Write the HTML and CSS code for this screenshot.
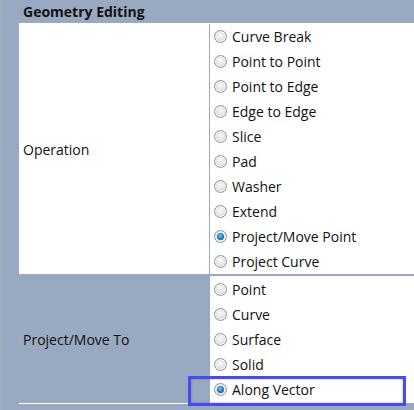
FILE: index.html
```html
<!DOCTYPE html>
<html>
<head>
<meta charset="utf-8">
<link rel="stylesheet" href="styles.css">
</head>
<body>
<div class="panel">
  <div class="header">Geometry Editing</div>
  <div class="grid">
    <div class="row row-op">
      <div class="label">Operation</div>
      <div class="options">
        <div class="opt"><span class="radio"></span>Curve Break</div>
        <div class="opt"><span class="radio"></span>Point to Point</div>
        <div class="opt"><span class="radio"></span>Point to Edge</div>
        <div class="opt"><span class="radio"></span>Edge to Edge</div>
        <div class="opt"><span class="radio"></span>Slice</div>
        <div class="opt"><span class="radio"></span>Pad</div>
        <div class="opt"><span class="radio"></span>Washer</div>
        <div class="opt"><span class="radio"></span>Extend</div>
        <div class="opt"><span class="radio checked"></span>Project/Move Point</div>
        <div class="opt"><span class="radio"></span>Project Curve</div>
      </div>
    </div>
    <div class="row row-proj">
      <div class="label">Project/Move To</div>
      <div class="options">
        <div class="opt"><span class="radio"></span>Point</div>
        <div class="opt"><span class="radio"></span>Curve</div>
        <div class="opt"><span class="radio"></span>Surface</div>
        <div class="opt"><span class="radio"></span>Solid</div>
        <div class="opt highlighted"><span class="radio checked"></span>Along Vector</div>
      </div>
    </div>
  </div>
</div>
</body>
</html>
```

FILE: styles.css
```css
html, body {
  margin: 0;
  padding: 0;
}
body {
  background: #9aa9c2;
  font-family: "Open Sans", "Noto Sans", sans-serif;
  font-size: 14px;
  color: #111;
  width: 414px;
  height: 410px;
  overflow: hidden;
}
.panel {
  border-left: 1px solid #aab0b8;
  height: 410px;
  box-sizing: border-box;
}
.header {
  height: 23px;
  line-height: 23px;
  padding-left: 22px;
  font-weight: bold;
  color: #111;
}
.grid {
  margin-left: 18px;
}
.row {
  display: grid;
  grid-template-columns: 191px 1fr;
}
.row-op {
  background: #fff;
  border-bottom: 2px solid #9aa9c2;
  padding-top: 1px;
}
.row-op .label {
  border-right: 1px solid #9aa9c2;
}
.row-proj {
  border-bottom: 1px solid #fff;
  width: 191px;
  grid-template-columns: 191px 224px;
}
.row-proj .label {
  background: #9aa9c2;
}
.row-proj .options {
  background: #fff;
  padding-top: 1px;
  padding-bottom: 1px;
}
.label {
  display: flex;
  align-items: center;
  padding-left: 4px;
}
.options {
  display: flex;
  flex-direction: column;
}
.opt {
  height: 25px;
  display: flex;
  align-items: center;
  gap: 5px;
  padding-left: 4px;
  position: relative;
}
.row-proj .opt {
  padding-left: 4px;
}
.radio {
  width: 11px;
  height: 11px;
  border-radius: 50%;
  border: 1px solid #939393;
  background: radial-gradient(circle at 50% 40%, #fafafa 0%, #e2e2e2 55%, #cfcfcf 100%);
  position: relative;
  flex: none;
  box-shadow: inset 0 0 0 1px #f4f4f4;
}
.radio.checked::after {
  content: "";
  position: absolute;
  left: 2px;
  top: 2px;
  width: 7px;
  height: 7px;
  border-radius: 50%;
  background: radial-gradient(circle at 45% 40%, #7cc8f2 0%, #2a86c4 45%, #0b4a7c 100%);
}
.highlighted::before {
  content: "";
  position: absolute;
  left: -22px;
  top: -1px;
  width: 212px;
  height: 24px;
  border: 3px solid #4749f2;
  box-shadow: inset 0 0 3px rgba(0,0,0,0.25);
  pointer-events: none;
}
```
